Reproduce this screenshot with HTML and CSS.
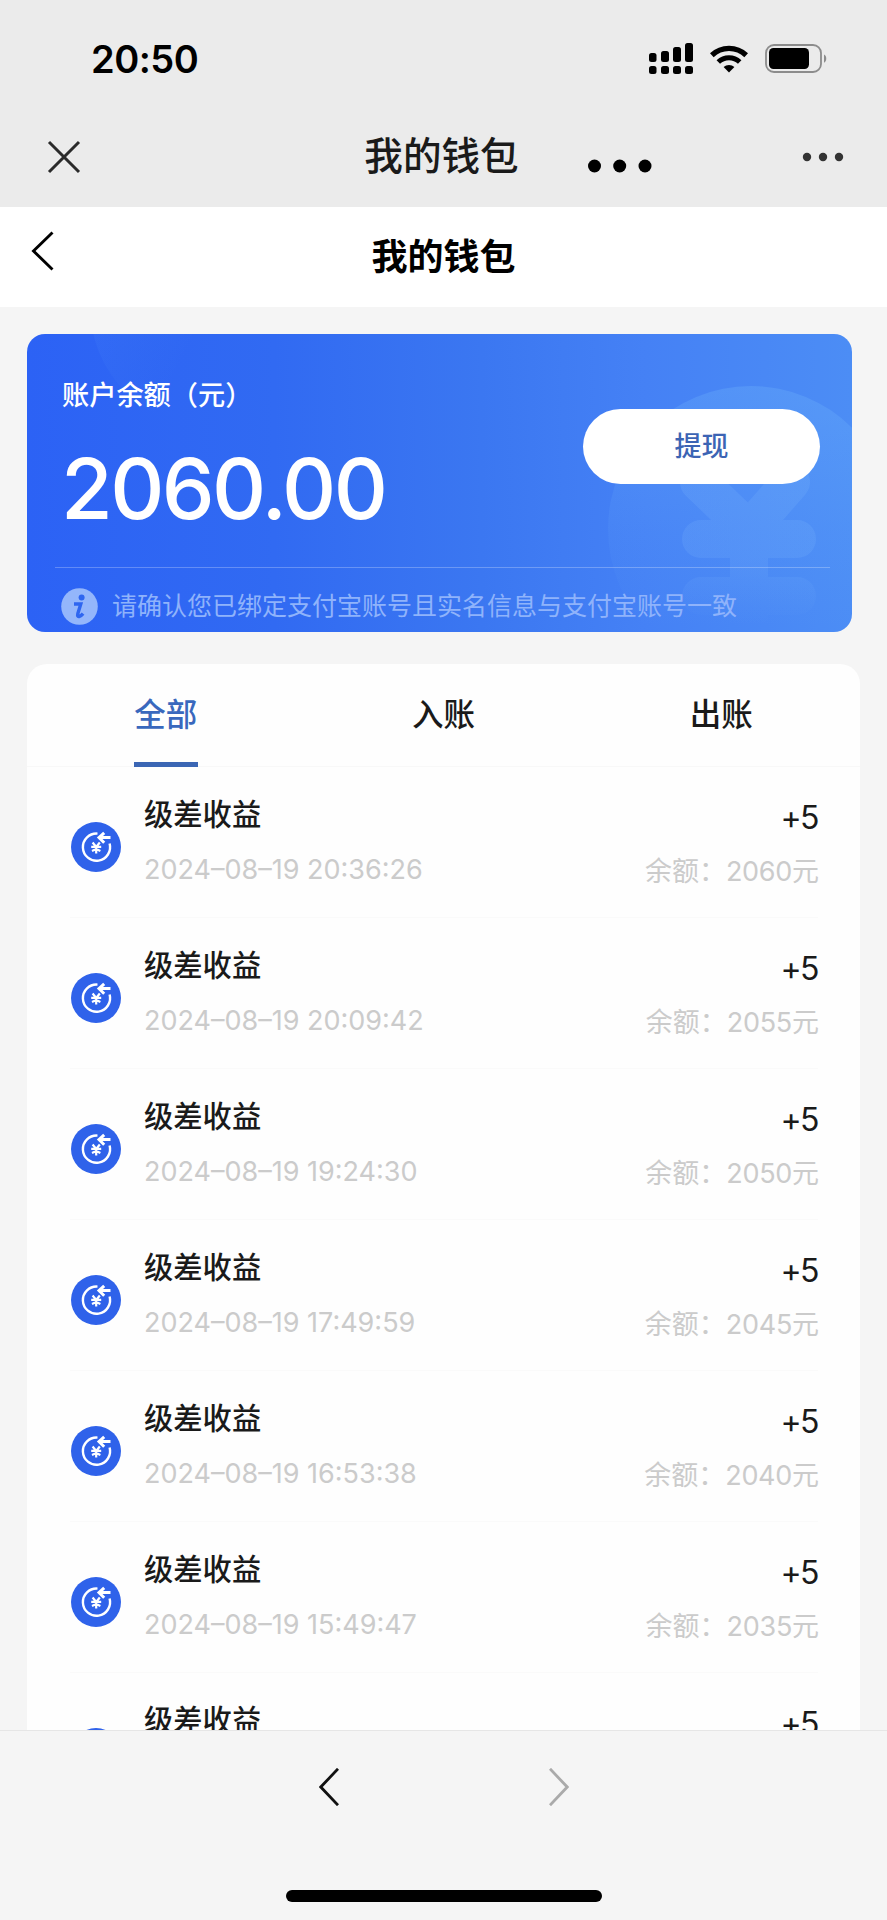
FILE: index.html
```html
<!DOCTYPE html>
<html lang="zh-CN">
<head>
  <meta charset="UTF-8">
  <title>我的钱包</title>
  <link rel="stylesheet" href="styles.css">
</head>
<body>
  <svg class="defs" width="0" height="0">
    <symbol id="icon-income" viewBox="0 0 50 50">
      <circle cx="25" cy="25" r="25" fill="#2f62ea"/>
      <path d="M26.5 11.6A13.6 13.6 0 1 0 38.6 21.5" fill="none" stroke="#fff" stroke-width="2.4"/>
      <path d="M39.5 15.6H29M33.2 10.8l-5.2 4.8 5.2 5.2" fill="none" stroke="#fff" stroke-width="3"/>
      <path d="M21.6 20.5l3.6 4.5 3.6-4.5M20.2 24.9h10M21 28.9l4.2-2 4.2 2M25.2 24.5v7" fill="none" stroke="#fff" stroke-width="2.2"/>
    </symbol>
  </svg>

  <div class="screen">
    <!-- 状态栏 -->
    <div class="status-bar">
      <span class="time">20:50</span>
      <div class="status-icons">
        <svg class="signal" width="44" height="32" viewBox="0 0 44 32">
          <rect x="0" y="10" width="7.5" height="9" rx="2.5"/>
          <rect x="12" y="8" width="8" height="11" rx="2.5"/>
          <rect x="24" y="4" width="8" height="15" rx="2.5"/>
          <rect x="36" y="0" width="8" height="19" rx="2.5"/>
          <rect x="0" y="23" width="7.5" height="8" rx="2.5"/>
          <rect x="12" y="23" width="8" height="8" rx="2.5"/>
          <rect x="24" y="23" width="8" height="8" rx="2.5"/>
          <rect x="36" y="23" width="8" height="8" rx="2.5"/>
        </svg>
        <svg class="wifi" width="38" height="28" viewBox="0 0 38 28">
          <path d="M1.8 10.2A25 25 0 0 1 36.2 10.2" fill="none" stroke="#000" stroke-width="5.4"/>
          <path d="M8.3 17A15.5 15.5 0 0 1 29.7 17" fill="none" stroke="#000" stroke-width="5"/>
          <path d="M13.6 22A8 8 0 0 1 24.4 22L19 27.6z"/>
        </svg>
        <svg class="battery" width="62" height="30" viewBox="0 0 62 30">
          <rect x="1" y="1" width="55" height="27" rx="8" fill="none" stroke="#8c8c8c" stroke-width="1.8"/>
          <rect x="4" y="4" width="40" height="21" rx="4.5"/>
          <path d="M59 10.5c3 1.2 3 7 0 8.2z" fill="#8c8c8c"/>
        </svg>
      </div>
    </div>

    <!-- 浏览器标题栏 -->
    <div class="app-bar">
      <svg class="close" width="34" height="34" viewBox="0 0 34 34">
        <path d="M2 2l30 30M32 2L2 32" fill="none" stroke="#2a2a2a" stroke-width="3"/>
      </svg>
      <span class="app-title">我的钱包</span>
      <svg class="more" width="42" height="10" viewBox="0 0 42 10">
        <circle cx="5" cy="5" r="4.2"/><circle cx="21" cy="5" r="4.2"/><circle cx="37" cy="5" r="4.2"/>
      </svg>
      <svg class="loading-dots" width="66" height="14" viewBox="0 0 66 14">
        <circle cx="7.5" cy="7" r="6.5"/><circle cx="32.7" cy="7" r="6.5"/><circle cx="58" cy="7" r="6.5"/>
      </svg>
    </div>

    <!-- 页面导航 -->
    <div class="nav-bar">
      <svg class="nav-back" width="24" height="40" viewBox="0 0 24 40">
        <path d="M22.5 1.5L3.5 20l19 18.5" fill="none" stroke="#000" stroke-width="2.9"/>
      </svg>
      <h1>我的钱包</h1>
    </div>

    <div class="content">
      <div class="balance-card">
        <svg class="card-bg" width="825" height="298" viewBox="0 0 825 298">
          <defs>
            <linearGradient id="glow" x1="0" y1="0" x2="0.6" y2="0.3">
              <stop offset="0" stop-color="#7ac0ff" stop-opacity="0.11"/>
              <stop offset="1" stop-color="#7ac0ff" stop-opacity="0"/>
            </linearGradient>
            <linearGradient id="coin" x1="0.5" y1="0" x2="0.5" y2="0.85">
              <stop offset="0" stop-color="#7ac0ff" stop-opacity="0.24"/>
              <stop offset="0.6" stop-color="#7ac0ff" stop-opacity="0.08"/>
              <stop offset="1" stop-color="#7ac0ff" stop-opacity="0"/>
            </linearGradient>
            <linearGradient id="yuan" gradientUnits="userSpaceOnUse" x1="0" y1="140" x2="0" y2="290">
              <stop offset="0" stop-color="#8cc4ff" stop-opacity="0.15"/>
              <stop offset="0.55" stop-color="#8cc4ff" stop-opacity="0.14"/>
              <stop offset="1" stop-color="#8cc4ff" stop-opacity="0"/>
            </linearGradient>
          </defs>
          <circle cx="185" cy="-28" r="122" fill="url(#glow)"/>
          <circle cx="724" cy="195" r="143" fill="url(#coin)"/>
          <path d="M672 148l50 48 42-48M722 196v100M674 205h96M674 262h96" fill="none" stroke="url(#yuan)" stroke-width="38" stroke-linecap="round" stroke-linejoin="round"/>
        </svg>
        <div class="balance-top">
          <div class="balance-info">
            <p class="balance-label">账户余额（元）</p>
            <p class="balance-amount">2060.00</p>
          </div>
          <button class="withdraw">提现</button>
        </div>
        <div class="notice">
          <svg width="37" height="37" viewBox="0 0 37 37">
            <circle cx="18.5" cy="18.5" r="18.3" fill="#94b6fb"/>
            <circle cx="20.6" cy="9.6" r="3" fill="#2f66f0"/>
            <path d="M13 16h6.800l-3 9.800q-.7 3.200 1.300 2.700t4-2.900" fill="none" stroke="#2f66f0" stroke-width="3.4"/>
          </svg>
          <span>请确认您已绑定支付宝账号且实名信息与支付宝账号一致</span>
        </div>
      </div>

      <div class="record-card">
        <div class="tabs">
          <a class="tab active">全部</a>
          <a class="tab">入账</a>
          <a class="tab">出账</a>
        </div>

        <div class="record">
          <svg class="record-icon"><use href="#icon-income"/></svg>
          <div class="record-left"><p class="name">级差收益</p><p class="date">2024–08–19 20:36:26</p></div>
          <div class="record-right"><p class="amount">+5</p><p class="balance">余额：<span>2060</span>元</p></div>
        </div>
        <div class="record">
          <svg class="record-icon"><use href="#icon-income"/></svg>
          <div class="record-left"><p class="name">级差收益</p><p class="date">2024–08–19 20:09:42</p></div>
          <div class="record-right"><p class="amount">+5</p><p class="balance">余额：<span>2055</span>元</p></div>
        </div>
        <div class="record">
          <svg class="record-icon"><use href="#icon-income"/></svg>
          <div class="record-left"><p class="name">级差收益</p><p class="date">2024–08–19 19:24:30</p></div>
          <div class="record-right"><p class="amount">+5</p><p class="balance">余额：<span>2050</span>元</p></div>
        </div>
        <div class="record">
          <svg class="record-icon"><use href="#icon-income"/></svg>
          <div class="record-left"><p class="name">级差收益</p><p class="date">2024–08–19 17:49:59</p></div>
          <div class="record-right"><p class="amount">+5</p><p class="balance">余额：<span>2045</span>元</p></div>
        </div>
        <div class="record">
          <svg class="record-icon"><use href="#icon-income"/></svg>
          <div class="record-left"><p class="name">级差收益</p><p class="date">2024–08–19 16:53:38</p></div>
          <div class="record-right"><p class="amount">+5</p><p class="balance">余额：<span>2040</span>元</p></div>
        </div>
        <div class="record">
          <svg class="record-icon"><use href="#icon-income"/></svg>
          <div class="record-left"><p class="name">级差收益</p><p class="date">2024–08–19 15:49:47</p></div>
          <div class="record-right"><p class="amount">+5</p><p class="balance">余额：<span>2035</span>元</p></div>
        </div>
        <div class="record">
          <svg class="record-icon"><use href="#icon-income"/></svg>
          <div class="record-left"><p class="name">级差收益</p></div>
          <div class="record-right"><p class="amount">+5</p></div>
        </div>
      </div>
    </div>

    <!-- 底部工具栏 -->
    <div class="toolbar">
      <div class="toolbar-buttons">
        <svg width="20" height="38" viewBox="0 0 20 38">
          <path d="M19 .8L1.8 19 19 37.2" fill="none" stroke="#111" stroke-width="2.8"/>
        </svg>
        <svg width="20" height="38" viewBox="0 0 20 38">
          <path d="M1 .8L18.2 19 1 37.2" fill="none" stroke="#aaa" stroke-width="2.8"/>
        </svg>
      </div>
      <div class="home-indicator"></div>
    </div>
  </div>
</body>
</html>
```

FILE: styles.css
```css
* {
  box-sizing: border-box;
}
body {
  margin: 0;
  background-color: #f5f5f5;
  font-family: Inter, 'Noto Sans CJK SC', sans-serif;
  color: #1a1a1a;
}
h1, p {
  margin: 0;
}
svg {
  display: block;
  flex-shrink: 0;
}
.defs {
  position: absolute;
}
.screen {
  display: flex;
  flex-direction: column;
  height: 1920px;
  overflow: hidden;
}

/* 状态栏 */
.status-bar {
  display: flex;
  justify-content: space-between;
  align-items: center;
  height: 118px;
  padding: 0 60px 0 91px;
  background-color: #ebebeb;
}
.time {
  font-size: 38px;
  font-weight: 600;
  letter-spacing: -0.5px;
  color: #000;
}
.status-icons {
  display: flex;
  align-items: center;
  gap: 17px;
}

/* 浏览器标题栏 */
.app-bar {
  position: relative;
  display: flex;
  justify-content: space-between;
  align-items: center;
  height: 89px;
  padding: 0 43px 12px 47px;
  background-color: #ebebeb;
}
.app-title {
  font-size: 38.6px;
  font-weight: 500;
  line-height: 51px;
}
.more {
  fill: #333;
}
.loading-dots {
  position: absolute;
  left: 587px;
  top: 41px;
}

/* 页面导航 */
.nav-bar {
  display: grid;
  grid-template-columns: 60px 1fr 60px;
  height: 100px;
  padding: 0 30px;
  background-color: #fff;
}
.nav-back {
  margin-top: 24px;
}
.nav-bar h1 {
  text-align: center;
  font-size: 36px;
  font-weight: 700;
  line-height: 100px;
  color: #000;
}

.content {
  flex: 1;
  padding: 27px 27px 0;
  overflow: hidden;
}

/* 余额卡片 */
.balance-card {
  position: relative;
  width: 825px;
  height: 298px;
  border-radius: 18px;
  overflow: hidden;
  background: linear-gradient(90deg, #2c62f5 0%, #316af2 30%, #3b77f1 55%, #4581f5 75%, #4c8df5 100%);
  color: #fff;
}
.card-bg {
  position: absolute;
  left: 0;
  top: 0;
}
.balance-top {
  position: relative;
  display: flex;
  justify-content: space-between;
  height: 233px;
  margin: 0 22px 0 28px;
  padding: 42px 10px 0 7px;
}
.balance-top::after {
  content: '';
  position: absolute;
  left: 0;
  right: 0;
  bottom: -1px;
  height: 1px;
  background-color: rgba(255, 255, 255, 0.25);
}
.balance-label {
  font-size: 27.2px;
  font-weight: 500;
  line-height: 40px;
}
.balance-amount {
  margin-top: 23px;
  margin-left: -1px;
  font-size: 84px;
  font-weight: 500;
  line-height: 100px;
  letter-spacing: -2.6px;
}
.withdraw {
  width: 237px;
  height: 75px;
  margin-top: 33px;
  padding: 0 0 4px;
  border: none;
  border-radius: 38px;
  background-color: #fff;
  color: #3c64b4;
  font-family: inherit;
  font-size: 27px;
  font-weight: 500;
}
.notice {
  position: relative;
  display: flex;
  align-items: center;
  gap: 14px;
  height: 65px;
  padding: 14px 0 0 34px;
  font-size: 25px;
  color: #8fb3fb;
}
.notice span {
  margin-top: -6px;
}

/* 收支记录 */
.record-card {
  margin-top: 32px;
  border-radius: 20px 20px 0 0;
  background-color: #fefefe;
}
.tabs {
  display: flex;
  height: 103px;
  border-bottom: 1px solid #f8f8f8;
}
.tab {
  flex: 1;
  position: relative;
  text-align: center;
  font-size: 31.5px;
  font-weight: 500;
  line-height: 101px;
}
.tab.active {
  color: #3968bd;
}
.tab.active::after {
  content: '';
  position: absolute;
  left: 50%;
  bottom: -1px;
  width: 64px;
  height: 5px;
  margin-left: -32px;
  background-color: #3b66b4;
}
.record {
  position: relative;
  display: flex;
  height: 151px;
  padding: 0 41px 0 43px;
}
.record::after {
  content: '';
  position: absolute;
  left: 43px;
  right: 42px;
  bottom: 0;
  height: 1px;
  background-color: #fafafa;
}
.record-icon {
  width: 50px;
  height: 50px;
  margin: 55px 23px 0 1px;
}
.record-left {
  flex: 1;
  padding-top: 28px;
}
.name {
  font-size: 29.3px;
  font-weight: 500;
  line-height: 40px;
}
.date {
  margin-top: 17px;
  font-size: 27px;
  line-height: 36px;
  color: #cbcbcb;
}
.record-right {
  padding-top: 31px;
  text-align: right;
}
.amount {
  font-size: 32px;
  line-height: 40px;
  letter-spacing: -1.5px;
  margin-right: 1px;
}
.balance {
  margin-top: 14px;
  font-size: 27px;
  line-height: 40px;
  color: #cbcbcb;
}
.balance span {
  letter-spacing: -0.3px;
}

/* 底部工具栏 */
.toolbar {
  display: flex;
  flex-direction: column;
  justify-content: space-between;
  align-items: center;
  height: 190px;
  padding: 37px 0 18px;
  border-top: 1px solid #e6e6e6;
  background-color: #f5f5f5;
}
.toolbar-buttons {
  display: flex;
  gap: 210px;
}
.home-indicator {
  width: 316px;
  height: 12px;
  border-radius: 6px;
  background-color: #000;
}
```
